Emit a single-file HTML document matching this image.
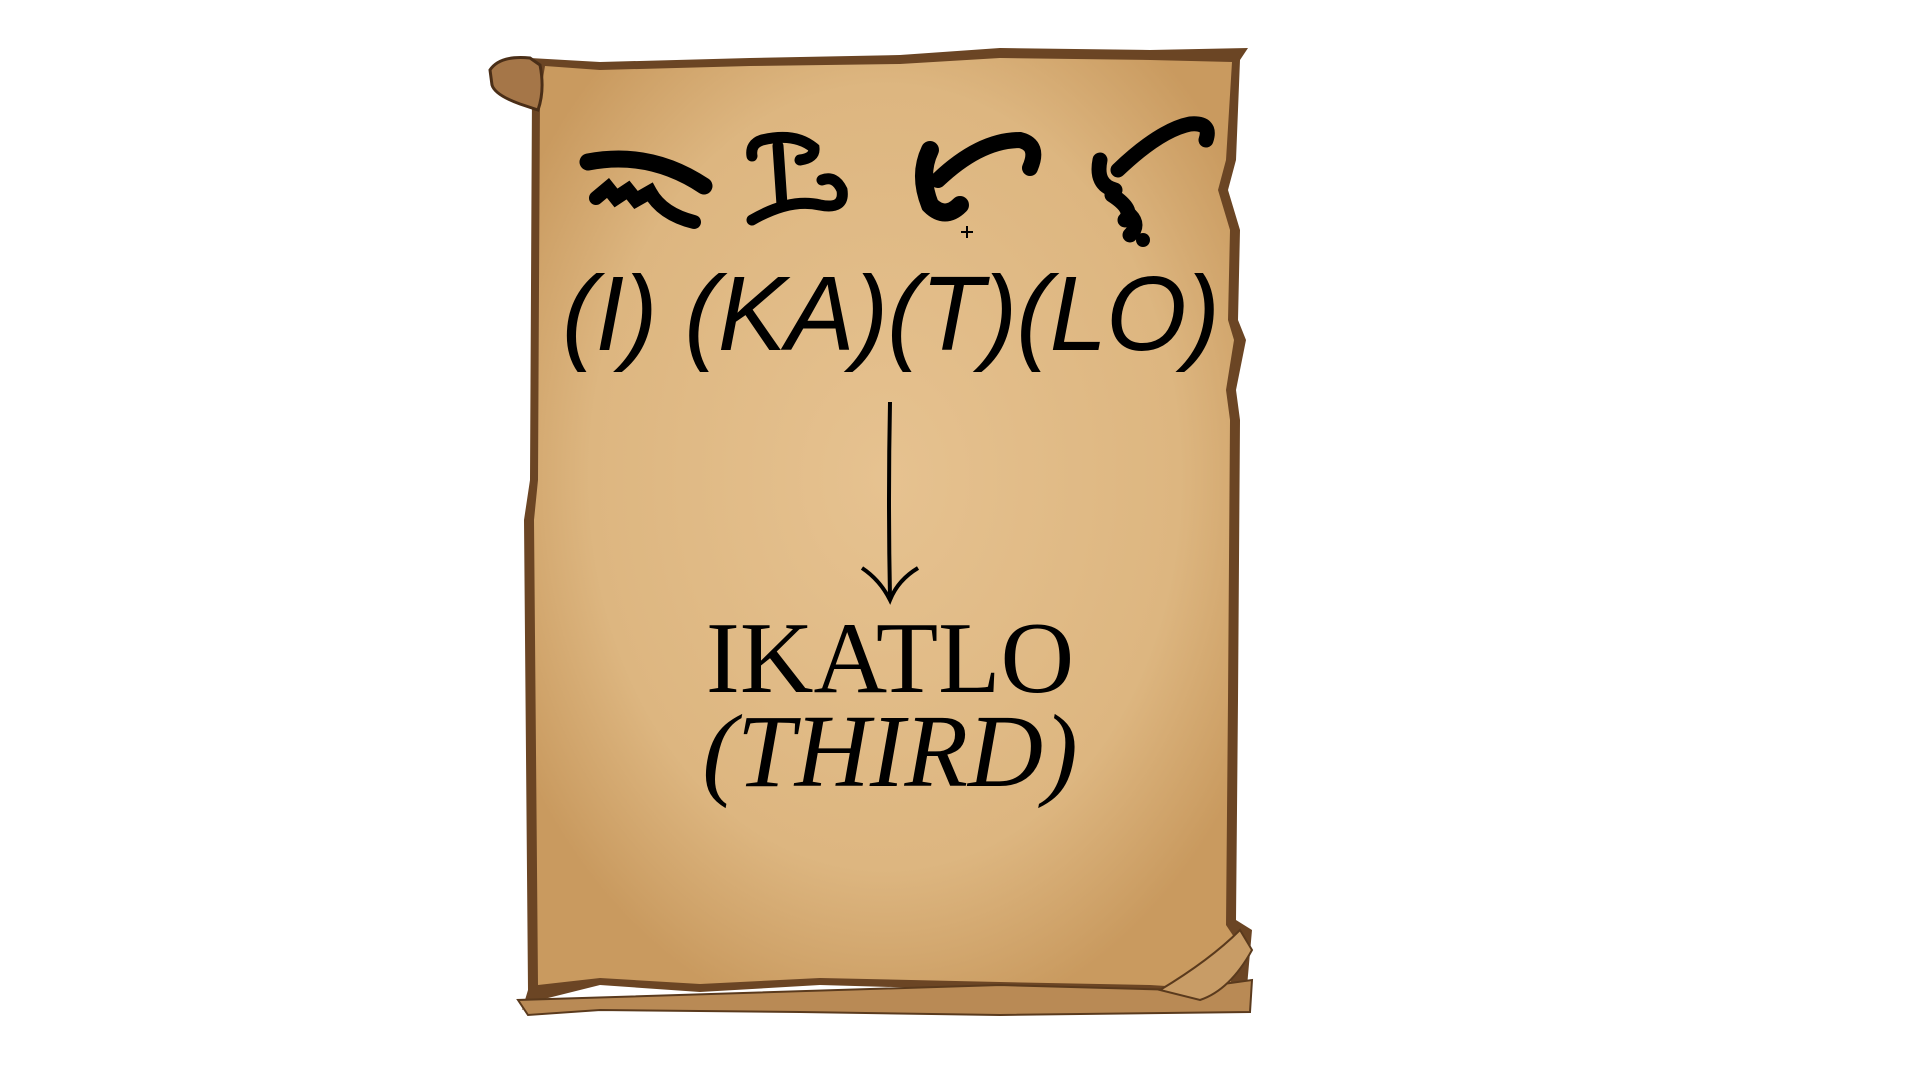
<!DOCTYPE html>
<html><head><meta charset="utf-8"><style>
html,body{margin:0;padding:0;width:1920px;height:1080px;background:#fff;overflow:hidden}
.t{position:absolute;white-space:nowrap;color:#000}
</style></head><body>
<svg width="1920" height="1080" style="position:absolute;left:0;top:0">
<defs>
<radialGradient id="g" cx="50%" cy="45%" r="60%">
<stop offset="0" stop-color="#e6c290"/><stop offset="0.7" stop-color="#ddb680"/><stop offset="1" stop-color="#c99a5f"/>
</radialGradient>
</defs>
<path d="M532 92 L530 480 L524 520 L528 990 L522 1010 L540 1000 L600 985 L700 992 L820 985 L1000 990 L1150 994 L1246 998 L1252 930 L1236 920 L1238 700 L1240 420 L1236 390 L1246 340 L1238 320 L1240 230 L1228 190 L1236 160 L1240 60 L1248 48 L1150 50 L1000 48 L900 55 L750 58 L600 62 L530 58 Z" fill="#6b4524"/>
<path d="M540 96 L538 480 L534 520 L538 985 L600 978 L700 984 L820 978 L1000 982 L1150 985 L1230 990 L1236 940 L1226 925 L1228 700 L1230 420 L1226 390 L1234 340 L1228 320 L1230 230 L1218 190 L1226 160 L1232 62 L1150 60 L1000 58 L900 64 L750 66 L600 70 L545 66 Z" fill="url(#g)"/>
<path d="M490 70 Q500 55 530 58 L540 65 Q545 90 538 110 L520 104 Q495 95 492 85 Z" fill="#a57648" stroke="#4a2e17" stroke-width="3"/>
<path d="M518 1000 L528 1015 L600 1010 L800 1012 L1000 1015 L1250 1012 L1252 980 L1180 990 L1000 985 Z" fill="#b98a55" stroke="#5a3a1d" stroke-width="2"/>
<path d="M1160 990 Q1210 960 1240 930 L1252 950 Q1230 990 1200 1000 Z" fill="#c89c66" stroke="#5a3a1d" stroke-width="2"/>
<g fill="none" stroke="#000" stroke-linecap="round" stroke-width="14">
<path d="M588 162 Q650 150 704 186" stroke-width="17"/>
<path d="M596 198 L608 188 L616 198 L628 190 L636 200 L650 192 Q662 214 694 222" stroke-width="14"/>
<path d="M752 156 Q750 144 762 140 Q795 132 814 148 Q815 158 800 160" stroke-width="11"/>
<path d="M778 146 L782 205" stroke-width="11"/>
<path d="M752 220 Q790 198 820 205 Q845 210 842 190 Q835 175 822 180" stroke-width="11"/>
<path d="M930 150 Q918 175 930 205 Q945 220 960 205" stroke-width="18"/>
<path d="M938 180 Q980 140 1020 140 Q1040 145 1030 168" stroke-width="16"/>
<path d="M1100 160 Q1095 185 1115 190 M1118 170 Q1160 130 1190 124 Q1212 122 1206 140 M1112 195 Q1135 210 1125 220 M1130 215 Q1140 225 1130 235" stroke-width="15"/>
</g>
<circle cx="1143" cy="240" r="7"/>
<path d="M967 226 v12 M961 232 h12" stroke="#000" stroke-width="2"/>
<path d="M890 402 Q888 500 890 598" stroke="#000" stroke-width="4" fill="none"/>
<path d="M862 568 Q880 580 890 600 Q898 580 918 568" stroke="#000" stroke-width="4" fill="none"/>
</svg>
<div class="t" style="left:562px;top:254px;font:italic 106px 'Liberation Sans',sans-serif;letter-spacing:-1px;transform:scaleX(0.975);transform-origin:left">(I) (KA)(T)(LO)</div>
<div class="t" style="left:0;width:1780px;text-align:center;top:600px;font:102px 'Liberation Serif',serif">IKATLO</div>
<div class="t" style="left:0;width:1780px;text-align:center;top:692px;font:italic 104px 'Liberation Serif',serif">(THIRD)</div>
</body></html>
